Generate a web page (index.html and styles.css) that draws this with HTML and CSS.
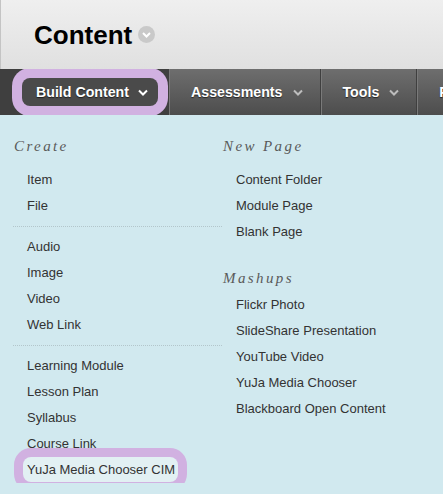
FILE: index.html
```html
<!DOCTYPE html>
<html lang="en">
<head>
    <meta charset="UTF-8">
    <meta name="viewport" content="width=device-width, initial-scale=1.0">
    <title>Content</title>
    <link rel="stylesheet" href="styles.css">
</head>
<body>
    <div class="page-header">
        <h1>Content</h1>
        <span class="title-menu">
            <svg width="17" height="17" viewBox="0 0 17 17"><circle cx="8.5" cy="8.5" r="8.5" fill="#c9c9c9"/><path d="M5 7l3.5 3.5L12 7" fill="none" stroke="#fff" stroke-width="2"/></svg>
        </span>
    </div>

    <nav class="tabs">
        <div class="tab tab-active">
            <span class="tab-button">Build Content
                <svg class="chevron" width="10" height="7" viewBox="0 0 10 7"><path d="M1 1.5l4 4 4-4" fill="none" stroke="#fff" stroke-width="2"/></svg>
            </span>
        </div>
        <div class="tab">Assessments
            <svg class="chevron" width="10" height="7" viewBox="0 0 10 7"><path d="M1 1.5l4 4 4-4" fill="none" stroke="#bdbdbd" stroke-width="2"/></svg>
        </div>
        <div class="tab">Tools
            <svg class="chevron" width="10" height="7" viewBox="0 0 10 7"><path d="M1 1.5l4 4 4-4" fill="none" stroke="#bdbdbd" stroke-width="2"/></svg>
        </div>
        <div class="tab">Partner Content</div>
    </nav>

    <div class="menu">
        <div class="menu-col col-create">
            <h3>Create</h3>
            <ul>
                <li>Item</li>
                <li>File</li>
            </ul>
            <hr>
            <ul>
                <li>Audio</li>
                <li>Image</li>
                <li>Video</li>
                <li>Web Link</li>
            </ul>
            <hr>
            <ul>
                <li>Learning Module</li>
                <li>Lesson Plan</li>
                <li>Syllabus</li>
                <li>Course Link</li>
                <li><span class="hovered">YuJa Media Chooser CIM</span></li>
            </ul>
        </div>
        <div class="menu-col">
            <h3>New Page</h3>
            <ul>
                <li>Content Folder</li>
                <li>Module Page</li>
                <li>Blank Page</li>
            </ul>
            <h3 class="mashups">Mashups</h3>
            <ul>
                <li>Flickr Photo</li>
                <li>SlideShare Presentation</li>
                <li>YouTube Video</li>
                <li>YuJa Media Chooser</li>
                <li>Blackboard Open Content</li>
            </ul>
        </div>
    </div>
</body>
</html>
```

FILE: styles.css
```css
body {
    margin: 0;
    font-family: "Liberation Sans", Arial, sans-serif;
    background-color: #d1e9ef;
    overflow: hidden;
}
.page-header {
    height: 69px;
    display: flex;
    align-items: center;
    padding-left: 33px;
    border-left: 1px solid #c4c4c4;
    box-sizing: border-box;
    background: linear-gradient(#efefef, #e0e0e0);
}
.page-header h1 {
    margin: 1px 6px 0 0;
    font-size: 26px;
    font-weight: bold;
    color: #000;
}
.title-menu {
    display: flex;
}

/* tab bar */
.tabs {
    display: flex;
    height: 46px;
    background: linear-gradient(#6e6e6e, #4d4d4d);
    white-space: nowrap;
    overflow: hidden;
}
.tab {
    display: flex;
    align-items: center;
    flex-shrink: 0;
    padding: 0 17px 0 22px;
    font-size: 14.2px;
    font-weight: bold;
    color: #fff;
    text-shadow: 0 1px 1px rgba(0,0,0,0.6);
    border-right: 1px solid #3f3f3f;
    box-shadow: inset 1px 0 0 #7a7a7a;
}
.tab .chevron {
    margin-left: 10px;
    margin-top: 1px;
}
.tab-active {
    padding: 0 10px 0 22px;
    background: #3f3f3f;
    box-shadow: none;
    width: 136px;
}
.tab-button {
    display: flex;
    align-items: center;
    box-sizing: border-box;
    height: 28px;
    width: 136px;
    padding-left: 14px;
    border-radius: 8px;
    background: #4a4a4a;
    box-shadow: 0 0 0 10px #d1b1e1;
}
.tab-button .chevron {
    margin-left: 9px;
}

/* build content menu */
.menu {
    display: flex;
    padding: 21px 0 0 13px;
}
.menu-col {
    width: 209px;
}
.menu h3 {
    margin: 0 0 11px 1px;
    height: 20px;
    line-height: 20px;
    font-family: "Liberation Serif", "Times New Roman", serif;
    font-style: italic;
    font-weight: normal;
    font-size: 15px;
    letter-spacing: 2.4px;
    color: #5a5a5a;
}
.menu h3.mashups {
    margin-top: 23px;
    margin-bottom: 4px;
}
.menu ul {
    list-style: none;
    margin: 0;
    padding: 0;
}
.menu li {
    height: 26px;
    line-height: 26px;
    padding-left: 14px;
    font-size: 13px;
    color: #333;
}
.menu hr {
    margin: 7px 0 7px;
    border: none;
    border-top: 1px dotted #b3c6cb;
}
.hovered {
    display: inline-block;
    margin-left: -4px;
    padding: 0 3px 0 4px;
    line-height: 25px;
    border-radius: 8px;
    background: #e2f0f3;
    box-shadow: 0 0 0 9px #d1b1e1;
}
```
